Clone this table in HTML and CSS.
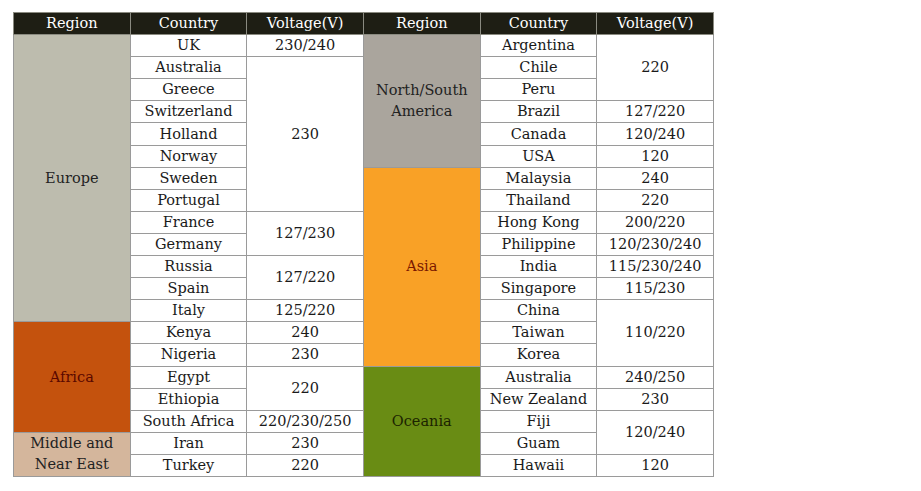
FILE: index.html
```html
<!DOCTYPE html>
<html>
<head>
<meta charset="utf-8">
<link rel="stylesheet" href="styles.css">
</head>
<body>
<table class="volt">
<colgroup><col class="c"><col class="c"><col class="c"><col class="c"><col class="c"><col class="c"></colgroup>
<thead>
<tr><th>Region</th><th>Country</th><th>Voltage(V)</th><th>Region</th><th>Country</th><th>Voltage(V)</th></tr>
</thead>
<tbody>
<tr><td rowspan="13" class="reg europe">Europe</td><td>UK</td><td>230/240</td><td rowspan="6" class="reg america">North/South<br>America</td><td>Argentina</td><td rowspan="3">220</td></tr>
<tr><td>Australia</td><td rowspan="7">230</td><td>Chile</td></tr>
<tr><td>Greece</td><td>Peru</td></tr>
<tr><td>Switzerland</td><td>Brazil</td><td>127/220</td></tr>
<tr><td>Holland</td><td>Canada</td><td>120/240</td></tr>
<tr><td>Norway</td><td>USA</td><td>120</td></tr>
<tr><td>Sweden</td><td rowspan="9" class="reg asia">Asia</td><td>Malaysia</td><td>240</td></tr>
<tr><td>Portugal</td><td>Thailand</td><td>220</td></tr>
<tr><td>France</td><td rowspan="2">127/230</td><td>Hong Kong</td><td>200/220</td></tr>
<tr><td>Germany</td><td>Philippine</td><td>120/230/240</td></tr>
<tr><td>Russia</td><td rowspan="2">127/220</td><td>India</td><td>115/230/240</td></tr>
<tr><td>Spain</td><td>Singapore</td><td>115/230</td></tr>
<tr><td>Italy</td><td>125/220</td><td>China</td><td rowspan="3">110/220</td></tr>
<tr><td rowspan="5" class="reg africa">Africa</td><td>Kenya</td><td>240</td><td>Taiwan</td></tr>
<tr><td>Nigeria</td><td>230</td><td>Korea</td></tr>
<tr><td>Egypt</td><td rowspan="2">220</td><td rowspan="5" class="reg oceania">Oceania</td><td>Australia</td><td>240/250</td></tr>
<tr><td>Ethiopia</td><td>New Zealand</td><td>230</td></tr>
<tr><td>South Africa</td><td>220/230/250</td><td>Fiji</td><td rowspan="2">120/240</td></tr>
<tr><td rowspan="2" class="reg mideast">Middle and<br>Near East</td><td>Iran</td><td>230</td><td>Guam</td></tr>
<tr><td>Turkey</td><td>220</td><td>Hawaii</td><td>120</td></tr>
</tbody>
</table>
</body>
</html>
```
FILE: styles.css
```css
html, body {
  margin: 0;
  background: #ffffff;
}
body {
  padding: 12px 0 0 13px;
}
.volt {
  border-collapse: collapse;
  table-layout: fixed;
  width: 700px;
  font-family: "DejaVu Serif", serif;
  font-size: 14.5px;
  color: #1a1a1a;
}
.volt .c {
  width: 116.67px;
}
.volt tr {
  height: 22.1px;
}
.volt th, .volt td {
  padding: 0;
  text-align: center;
  vertical-align: middle;
  border: 1px solid #9a9a9a;
  line-height: 21px;
  white-space: nowrap;
}
.volt th {
  background: #1e1e14;
  color: #ffffff;
  font-weight: normal;
  border-color: #8a8a80;
}
.reg {
  border-color: transparent;
}
.europe { background: #bdbcae; color: #222; }
.america { background: #aaa59d; color: #222; }
.asia { background: #f9a126; color: #7a1800; }
.africa { background: #c4520d; color: #5a0800; }
.mideast { background: #d4b69c; color: #222; }
.oceania { background: #698c14; color: #1c2400; }
```
